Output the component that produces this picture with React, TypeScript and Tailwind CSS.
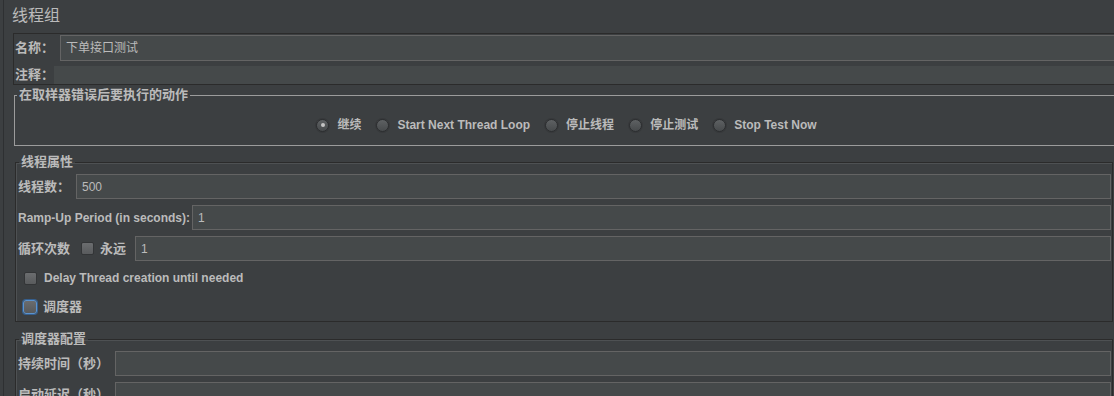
import React from "react";

const Radio = ({ checked, label }: { checked?: boolean; label: string }) => (
  <div className="flex items-center gap-[8px]">
    <span className="w-[13px] h-[13px] rounded-full border border-[#2c2e30] bg-linear-to-b from-[#5e6163] to-[#474a4c] flex items-center justify-center shadow-[0_0_0_1px_#37393b]">
      {checked && <span className="w-[4px] h-[4px] rounded-full bg-[#c4c4c4]" />}
    </span>
    <span className="text-[12px] leading-[14px] font-bold text-[#bbbbbb]">{label}</span>
  </div>
);

const Check = ({ focus }: { focus?: boolean }) => (
  <span
    className={
      focus
        ? "w-[14px] h-[14px] shrink-0 rounded-[3px] border border-[#5b93cf] bg-linear-to-b from-[#6a6c6e] to-[#585a5c] shadow-[0_0_0_1px_#355f8f]"
        : "w-[13px] h-[13px] shrink-0 rounded-[2px] border border-[#333537] bg-linear-to-b from-[#6b6d6f] to-[#595b5d]"
    }
  />
);

const Input = ({ value, h = "h-[25px]" }: { value?: string; h?: string }) => (
  <div className={`flex-1 min-w-0 ${h} bg-[#45494a] border border-[#646464] flex items-center pl-[5px] text-[12px] text-[#bbbbbb]`}>
    {value}
  </div>
);

const Label = ({ w, children }: { w: string; children: React.ReactNode }) => (
  <span className={`${w} shrink-0 text-[13px] leading-[16px] font-bold text-[#bbbbbb] whitespace-nowrap`}>{children}</span>
);

export default function App() {
  return (
    <div className="w-[1114px] h-[396px] overflow-hidden bg-[#3c3f41] flex font-['Liberation_Sans','Noto_Sans_CJK_SC',sans-serif] text-[#bbbbbb]">
      <div className="w-[3px] shrink-0" />
      <div className="w-px shrink-0 bg-[#2e3032]" />
      <div className="flex-1 min-w-0 flex flex-col">
        <div className="h-[33px] pl-[8px] pt-[5px] text-[16px] leading-[22px] text-[#bbbbbb] shrink-0">线程组</div>

        <div className="ml-[9px] mr-[-20px] shrink-0 border-t border-l border-b border-[#2b2b2b] pt-[1px] flex flex-col">
          <div className="h-[26px] flex items-center pl-[1px]">
            <Label w="w-[45px]">名称：</Label>
            <Input value="下单接口测试" h="h-[26px]" />
          </div>
          <div className="h-[18px] mt-[5px] flex items-center pl-[1px]">
            <Label w="w-[39px]">注释：</Label>
            <div className="flex-1 h-[18px] bg-[#45494a]" />
          </div>
        </div>

        <fieldset className="ml-[10px] mt-[3px] w-[1104px] shrink-0 border border-[#9c9c9c] border-r-0">
          <legend className="ml-[2px] px-[2px] text-[13px] leading-[14px] font-bold text-[#bbbbbb]">在取样器错误后要执行的动作</legend>
          <div className="h-[43px] pt-[3px] flex items-center justify-center gap-[15px]">
            <Radio checked label="继续" />
            <Radio label="Start Next Thread Loop" />
            <Radio label="停止线程" />
            <Radio label="停止测试" />
            <Radio label="Stop Test Now" />
          </div>
        </fieldset>

        <fieldset className="ml-[11px] mr-[1px] mt-[9px] shrink-0 border border-[#2b2b2b] shadow-[inset_1px_1px_0_#4e5153] pl-[2px] pr-[1px] pb-[4px]">
          <legend className="ml-[1px] px-[2px] text-[13px] leading-[14px] font-bold text-[#bbbbbb]">线程属性</legend>
          <div className="pt-[5px] flex flex-col">
            <div className="h-[25px] flex items-center">
              <Label w="w-[58px]">线程数：</Label>
              <Input value="500" />
            </div>
            <div className="h-[25px] mt-[6px] flex items-center">
              <Label w="w-[174px]">
                <span className="text-[12px]">Ramp-Up Period (in seconds):</span>
              </Label>
              <Input value="1" />
            </div>
            <div className="h-[25px] mt-[6px] flex items-center">
              <Label w="w-[63px]">循环次数</Label>
              <Check />
              <span className="ml-[6px] w-[35px] shrink-0 text-[13px] leading-[16px] font-bold">永远</span>
              <Input value="1" />
            </div>
            <div className="h-[20px] mt-[7px] flex items-center pl-[6px] gap-[7px]">
              <Check />
              <span className="text-[12px] leading-[14px] font-bold">Delay Thread creation until needed</span>
            </div>
            <div className="h-[20px] mt-[9px] flex items-center pl-[5px] gap-[6px]">
              <Check focus />
              <span className="text-[13px] leading-[16px] font-bold">调度器</span>
            </div>
          </div>
        </fieldset>

        <fieldset className="ml-[11px] mr-[1px] mt-[10px] shrink-0 border border-[#2b2b2b] shadow-[inset_1px_1px_0_#4e5153] pl-[2px] pr-[1px] pb-[5px]">
          <legend className="ml-[1px] px-[2px] text-[13px] leading-[14px] font-bold text-[#bbbbbb]">调度器配置</legend>
          <div className="pt-[5px] flex flex-col">
            <div className="h-[25px] flex items-center">
              <Label w="w-[97px]">持续时间（秒）</Label>
              <Input />
            </div>
            <div className="h-[25px] mt-[6px] flex items-center">
              <Label w="w-[97px]">启动延迟（秒）</Label>
              <Input />
            </div>
          </div>
        </fieldset>
      </div>
    </div>
  );
}
